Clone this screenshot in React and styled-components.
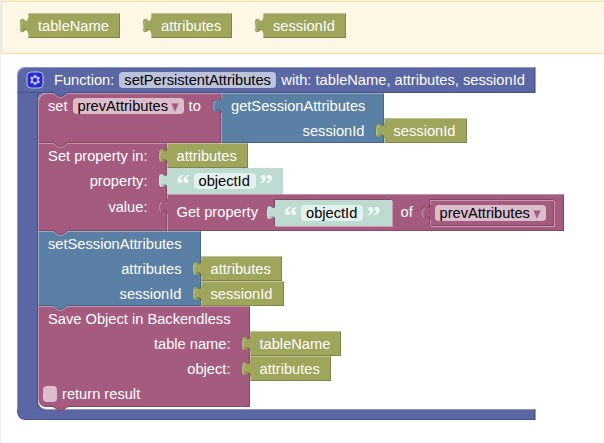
import styled, { createGlobalStyle } from 'styled-components';

const olive = '#9fa55b';
const plum = '#a55b80';
const steel = '#5b80a5';
const indigo = '#5b67a5';
const mint = '#bddbd1';

function Tab({ color, inline }) {
    return (
        <TabShape width="10" height="17" viewBox="-9 4 10 17">
            <path
                d="M0,5 c0,10 -8,-8 -8,7.5 s8,-2.5 8,7.5 h1 v-15z"
                fill={color}
                stroke="#000"
                strokeOpacity={inline ? 0.3 : 0.12}
                strokeDasharray={inline ? '14 60' : '26 60'}
            />
            <path
                d="M0,5 c0,10 -8,-8 -8,7.5 s8,-2.5 8,7.5 h1 v-15z"
                fill={color}
            />
            <path
                d="M-5,9.2 q-2.4,-0.8 -2.4,4 q0,4.5 1.4,4.3"
                fill="none"
                stroke="#fff"
                strokeOpacity="0.35"
            />
            <path
                d="M-5.5,17.6 c3,-1.8 5,-1.6 5.3,1.5"
                fill="none"
                stroke="#000"
                strokeOpacity="0.2"
            />
        </TabShape>
    );
}

function Notch({ color, bottom }) {
    return (
        <NotchShape
            $bottom={bottom}
            width="17"
            height="6"
            viewBox="-1 -1 17 6"
        >
            <path d="M0,-1 H15 V0 L9,4 H6 L0,0z" fill={color} />
            <path
                d="M-1,-0.5 H0 L6,3.5 H9 L15,-0.5 H16"
                fill="none"
                stroke="#000"
                strokeOpacity="0.2"
            />
            {!bottom && (
                <path
                    d="M0,0.5 L6,4.5 H9 L15,0.5"
                    fill="none"
                    stroke="#fff"
                    strokeOpacity="0.35"
                />
            )}
        </NotchShape>
    );
}

function Variable({ name, width }) {
    return (
        <Value $color={olive} $width={width} $height={25}>
            <Tab color={olive} />
            {name}
        </Value>
    );
}

function Quoted({ text, width, inline }) {
    return (
        <Value $color={mint} $width={width} $height={26} $inline={inline} $flat>
            <Tab color={mint} inline={inline} />
            <Quote>“</Quote>
            <Field $width={62}>{text}</Field>
            <Quote>”</Quote>
        </Value>
    );
}

function Dropdown({ text }) {
    return (
        <Field $width={111}>
            {text}
            <Arrow>▾</Arrow>
        </Field>
    );
}

function GearIcon() {
    return (
        <Gear width="18" height="18" viewBox="-1 -1 18 18">
            <rect width="16" height="16" rx="4" fill="#00f" stroke="#fff" />
            <path
                fill="#fff"
                d="m4.203,7.296 0,1.368 -0.92,0.677 -0.11,0.41 0.9,1.559 0.41,0.11 1.043,-0.457 1.187,0.683 0.127,1.134 0.3,0.3 1.8,0 0.3,-0.299 0.127,-1.138 1.185,-0.682 1.046,0.458 0.409,-0.11 0.9,-1.559 -0.11,-0.41 -0.92,-0.677 0,-1.366 0.92,-0.677 0.11,-0.41 -0.9,-1.559 -0.409,-0.109 -1.046,0.458 -1.185,-0.682 -0.127,-1.138 -0.3,-0.299 -1.8,0 -0.3,0.3 -0.126,1.135 -1.187,0.682 -1.043,-0.457 -0.41,0.11 -0.899,1.559 0.108,0.409z"
            />
            <circle cx="8" cy="8" r="2.3" fill="#00f" />
        </Gear>
    );
}

function App() {
    return (
        <Page>
            <GlobalStyle />
            <Shelf>
                <Variable name="tableName" width={92} />
                <Variable name="attributes" width={81} />
                <Variable name="sessionId" width={83} />
            </Shelf>
            <FunctionBlock>
                <Header>
                    <GearIcon />
                    <Label>Function:</Label>
                    <Field $width={157}>setPersistentAttributes</Field>
                    <Label>with: tableName, attributes, sessionId</Label>
                </Header>
                <Middle>
                    <Stack>
                        <Statement $color={plum} $width={183} $height={50} $first>
                            <Notch color={indigo} />
                            <Row>
                                <RowLabel $left>
                                    set
                                    <Dropdown text="prevAttributes" />
                                    to
                                </RowLabel>
                                <CallBlock>
                                    <Tab color={steel} />
                                    <Row>
                                        <RowLabel $left>getSessionAttributes</RowLabel>
                                    </Row>
                                    <Row>
                                        <RowLabel>sessionId</RowLabel>
                                        <Variable name="sessionId" width={83} />
                                    </Row>
                                </CallBlock>
                            </Row>
                        </Statement>
                        <Statement $color={plum} $width={129} $height={88}>
                            <Notch color={plum} />
                            <Row>
                                <RowLabel>Set property in:</RowLabel>
                                <Variable name="attributes" width={81} />
                            </Row>
                            <Row $height={26}>
                                <RowLabel>property:</RowLabel>
                                <Quoted text="objectId" width={116} />
                            </Row>
                            <Row $height={37}>
                                <RowLabel>value:</RowLabel>
                                <Value $color={plum} $width={397} $height={37}>
                                    <Tab color={plum} />
                                    <InnerLabel $width={98}>Get property</InnerLabel>
                                    <Quoted text="objectId" width={117} inline />
                                    <InnerLabel $width={38} $indent={9}>of</InnerLabel>
                                    <Value $color={plum} $width={124} $height={26} $inline $tight>
                                        <Tab color={plum} inline />
                                        <Dropdown text="prevAttributes" />
                                    </Value>
                                </Value>
                            </Row>
                        </Statement>
                        <Statement $color={steel} $width={163} $height={75}>
                            <Notch color={plum} />
                            <Row>
                                <RowLabel $left>setSessionAttributes</RowLabel>
                            </Row>
                            <Row>
                                <RowLabel>attributes</RowLabel>
                                <Variable name="attributes" width={81} />
                            </Row>
                            <Row>
                                <RowLabel>sessionId</RowLabel>
                                <Variable name="sessionId" width={83} />
                            </Row>
                        </Statement>
                        <Statement $color={plum} $width={212} $height={101} $last>
                            <Notch color={steel} />
                            <Row>
                                <RowLabel $left>Save Object in Backendless</RowLabel>
                            </Row>
                            <Row>
                                <RowLabel>table name:</RowLabel>
                                <Variable name="tableName" width={91} />
                            </Row>
                            <Row>
                                <RowLabel>object:</RowLabel>
                                <Variable name="attributes" width={81} />
                            </Row>
                            <CheckRow>
                                <Checkbox />
                                return result
                            </CheckRow>
                            <Notch color={plum} bottom />
                        </Statement>
                    </Stack>
                </Middle>
                <Footer />
            </FunctionBlock>
        </Page>
    );
}

export default App;

const bevel = `
    box-shadow: inset 1px 1px 0 rgba(255, 255, 255, 0.35),
        inset -1px -1px 0 rgba(0, 0, 0, 0.2);
`;

const GlobalStyle = createGlobalStyle`
    * {
        box-sizing: border-box;
    }

    body {
        margin: 0;
        background: #fff;
    }
`;

const Page = styled.main`
    width: 604px;
    height: 443px;
    overflow: hidden;
    border-left: 1px solid #eee;
    border-top: 1px solid #eee;
    color: #fff;
    font-family: 'Liberation Sans', Arial, sans-serif;
    font-size: 14.667px;
    line-height: 16px;
    white-space: nowrap;
    cursor: default;
`;

const Shelf = styled.section`
    display: flex;
    gap: 31px;
    height: 53px;
    margin-right: -1px;
    padding: 11px 0 0 26px;
    border: 1px solid #ffe494;
    background: #fff7e6;
`;

const FunctionBlock = styled.section`
    display: flex;
    flex-direction: column;
    width: 519px;
    margin: 13px 0 0 16px;
`;

const Header = styled.header`
    display: flex;
    align-items: center;
    height: 26px;
    padding-left: 9px;
    border-radius: 8px 0 0 0;
    background: ${indigo};
    box-shadow: inset 1px 1px 0 rgba(255, 255, 255, 0.32),
        inset -1px 0 0 #9aa1c8, inset -2px -1px 0 rgba(0, 0, 0, 0.2);
`;

const Middle = styled.div`
    height: 316px;
    padding-left: 21px;
    background: linear-gradient(
        90deg,
        #8d95c0 1px,
        ${indigo} 1px,
        ${indigo} 20px,
        #49528a 20px,
        #49528a 21px,
        ${indigo} 21px,
        ${indigo} 32px,
        transparent 32px
    );
`;

const Stack = styled.div`
    height: 316px;
    border-radius: 8px 0 0 8px;
    background: #fff;
`;

const Footer = styled.footer`
    height: 11px;
    border-radius: 0 0 0 8px;
    background: linear-gradient(#8d95c0 1px, transparent 1px) 28px 0 no-repeat,
        ${indigo};
    box-shadow: inset -1px 0 0 #9aa1c8, inset -2px -1px 0 rgba(0, 0, 0, 0.2);
`;

const Statement = styled.div`
    position: relative;
    width: ${(props) => props.$width}px;
    height: ${(props) => props.$height}px;
    border-radius: ${(props) => (props.$first ? '8px' : 0)} 0 0
        ${(props) => (props.$last ? '8px' : 0)};
    background: ${(props) => props.$color};
    ${bevel}
`;

const Row = styled.div`
    display: flex;
    align-items: flex-start;
    height: ${(props) => props.$height || 25}px;
`;

const RowLabel = styled.div`
    display: flex;
    flex: 0 0 100%;
    align-items: center;
    justify-content: ${(props) => (props.$left ? 'flex-start' : 'flex-end')};
    gap: 5px;
    height: 26px;
    padding: 0 ${(props) => (props.$left ? 0 : 19.5)}px 0 10px;
`;

const Value = styled.div`
    position: relative;
    display: flex;
    flex: none;
    align-items: center;
    width: ${(props) => props.$width}px;
    height: ${(props) => props.$height}px;
    padding-left: ${(props) => (props.$tight ? 5 : 9.5)}px;
    padding-top: ${(props) => (props.$height === 25 ? 1 : 0)}px;
    background: ${(props) => props.$color};
    ${(props) => !props.$flat && bevel}
    ${(props) =>
        props.$inline &&
        `box-shadow: -1px -1px 0 rgba(0, 0, 0, 0.22),
            1px 1px 0 rgba(255, 255, 255, 0.4)
            ${
                props.$flat
                    ? ''
                    : ', inset 1px 1px 0 rgba(255, 255, 255, 0.35), inset -1px -1px 0 rgba(0, 0, 0, 0.2)'
            };`}

    ${Shelf} > & {
        padding-left: 10px;
    }

    & > &:has(span + span) {
        padding-left: 10.5px;
    }

    & > &:has(span > span) {
        padding-left: 5.5px;
    }
`;

const CallBlock = styled.div`
    position: relative;
    flex: none;
    width: 163px;
    height: 50px;
    background: ${steel};
    ${bevel}
`;

const Label = styled.span`
    flex: none;

    ${Header} & {
        margin: 0 5px;
    }

    ${Header} svg + & {
        margin-left: 10px;
    }
`;

const InnerLabel = styled.span`
    flex: none;
    width: ${(props) => props.$width}px;
    padding: 0 0 2px ${(props) => props.$indent || 0}px;
`;

const Field = styled.span`
    display: flex;
    flex: none;
    align-items: center;
    width: ${(props) => props.$width}px;
    height: 16px;
    padding-left: 5px;
    border-radius: 4px;
    background: rgba(255, 255, 255, 0.6);
    color: #000;
`;

const Arrow = styled.span`
    margin-left: 3.5px;
    color: ${plum};
    font-family: 'DejaVu Sans', sans-serif;
    font-size: 14px;
    transform: scaleY(1.2);
`;

const Quote = styled.span`
    width: 17px;
    height: 16px;
    color: rgba(255, 255, 255, 0.9);
    font-family: 'Liberation Serif', serif;
    font-size: 28px;
    font-weight: bold;
    line-height: 21px;
    text-indent: -0.5px;

    ${Field} + & {
        padding-left: 4px;
    }
`;

const CheckRow = styled.div`
    display: flex;
    align-items: center;
    gap: 5px;
    height: 26px;
    padding-left: 5px;
`;

const Checkbox = styled.span`
    width: 14px;
    height: 16px;
    border-radius: 4px;
    background: rgba(255, 255, 255, 0.6);
`;

const Gear = styled.svg`
    flex: none;
    opacity: 0.6;
`;

const TabShape = styled.svg`
    position: absolute;
    top: 4px;
    left: -9px;
`;

const NotchShape = styled.svg`
    position: absolute;
    top: ${(props) => (props.$bottom ? 'calc(100% - 1px)' : '-1px')};
    left: 14px;
    z-index: 1;
`;
